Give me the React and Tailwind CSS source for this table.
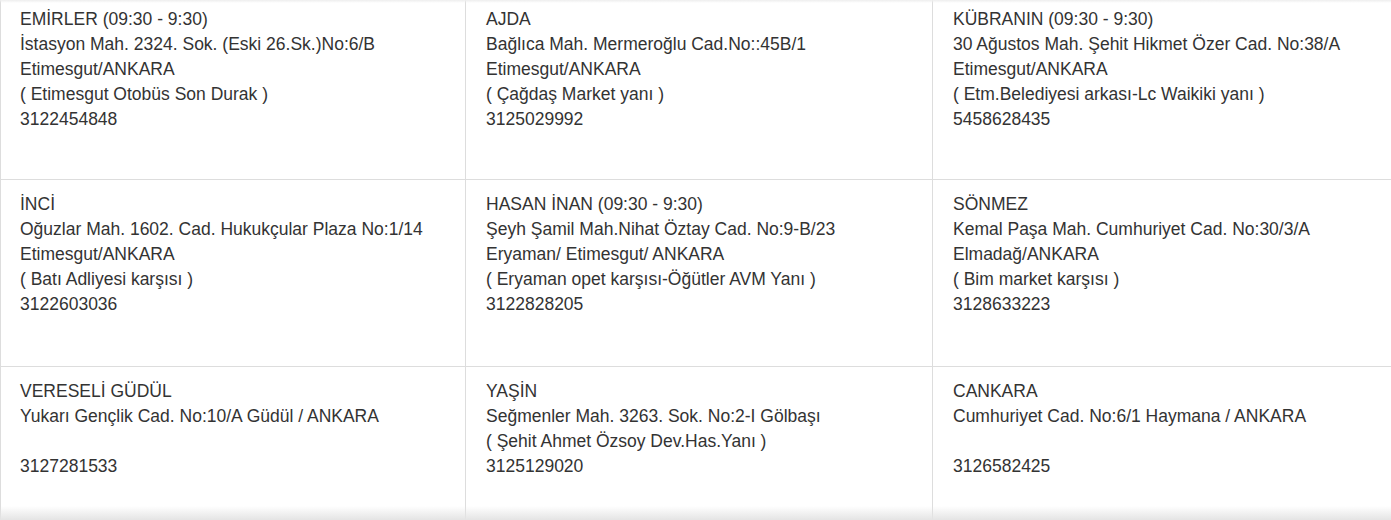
import React from "react";

const rows = [
  [
    ["EMİRLER (09:30 - 9:30)", "İstasyon Mah. 2324. Sok. (Eski 26.Sk.)No:6/B", "Etimesgut/ANKARA", "( Etimesgut Otobüs Son Durak )", "3122454848"],
    ["AJDA", "Bağlıca Mah. Mermeroğlu Cad.No::45B/1", "Etimesgut/ANKARA", "( Çağdaş Market yanı )", "3125029992"],
    ["KÜBRANIN (09:30 - 9:30)", "30 Ağustos Mah. Şehit Hikmet Özer Cad. No:38/A", "Etimesgut/ANKARA", "( Etm.Belediyesi arkası-Lc Waikiki yanı )", "5458628435"],
  ],
  [
    ["İNCİ", "Oğuzlar Mah. 1602. Cad. Hukukçular Plaza No:1/14", "Etimesgut/ANKARA", "( Batı Adliyesi karşısı )", "3122603036"],
    ["HASAN İNAN (09:30 - 9:30)", "Şeyh Şamil Mah.Nihat Öztay Cad. No:9-B/23", "Eryaman/ Etimesgut/ ANKARA", "( Eryaman opet karşısı-Öğütler AVM Yanı )", "3122828205"],
    ["SÖNMEZ", "Kemal Paşa Mah. Cumhuriyet Cad. No:30/3/A", "Elmadağ/ANKARA", "( Bim market karşısı )", "3128633223"],
  ],
  [
    ["VERESELİ GÜDÜL", "Yukarı Gençlik Cad. No:10/A Güdül / ANKARA", "", "3127281533"],
    ["YAŞİN", "Seğmenler Mah. 3263. Sok. No:2-I Gölbaşı", "( Şehit Ahmet Özsoy Dev.Has.Yanı )", "3125129020"],
    ["CANKARA", "Cumhuriyet Cad. No:6/1 Haymana / ANKARA", "", "3126582425"],
  ],
];

const widths = ["w-[465px] pl-[19px]", "w-[467px] pl-5", "w-[459px] pl-5"];
const heights = ["h-[185px]", "h-[187px]", "h-[187px]"];

function Cell({ lines, w, h }) {
  return (
    <div className={`${w} ${h} shrink-0 border-l border-b border-[#dddddd] pt-[12px]`}>
      {lines.map((l, i) => (
        <div key={i} className="h-[25px] whitespace-nowrap">
          {l}
        </div>
      ))}
    </div>
  );
}

export default function App() {
  return (
    <div className="relative h-[520px] w-[1391px] overflow-hidden bg-white font-['Liberation_Sans',Arial,sans-serif] text-[17.5px] leading-[25px] text-[#333333]">
      <div className="-mt-[5px] flex flex-col">
        {rows.map((row, r) => (
          <div key={r} className="flex">
            {row.map((lines, c) => (
              <Cell key={c} lines={lines} w={widths[c]} h={heights[r]} />
            ))}
          </div>
        ))}
      </div>
      <div className="pointer-events-none absolute inset-x-0 top-0 h-[3px] bg-gradient-to-b from-[#eeeeee] to-transparent" />
      <div className="pointer-events-none absolute inset-x-0 bottom-0 h-[14px] bg-gradient-to-b from-transparent to-[#e4e4e4]" />
    </div>
  );
}
